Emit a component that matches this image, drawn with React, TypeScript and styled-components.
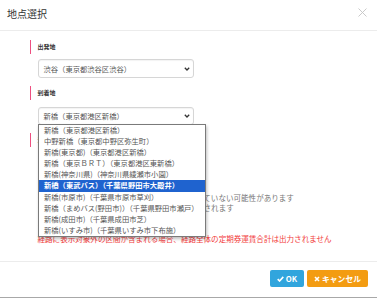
import React from 'react';
import styled, { createGlobalStyle } from 'styled-components';

const GlobalStyle = createGlobalStyle`
  html, body {
    margin: 0;
    padding: 0;
    background: #fff;
  }
  body {
    font-family: "Noto Sans CJK JP", "Noto Sans", sans-serif;
  }
`;

const departure = '渋谷（東京都渋谷区渋谷）';
const arrival = '新橋（東京都港区新橋）';

const options = [
  '新橋（東京都港区新橋）',
  '中野新橋（東京都中野区弥生町）',
  '新橋(東京都)（東京都港区新橋）',
  '新橋（東京ＢＲＴ）（東京都港区東新橋）',
  '新橋(神奈川県)（神奈川県綾瀬市小園）',
  '新橋（東武バス）（千葉県野田市大殿井）',
  '新橋(市原市)（千葉県市原市草刈）',
  '新橋（まめバス(野田市)）（千葉県野田市瀬戸）',
  '新橋(成田市)（千葉県成田市芝）',
  '新橋(いすみ市)（千葉県いすみ市下布施）',
];

const Chevron = () => (
  <svg width="6" height="4" viewBox="0 0 6 4">
    <path d="M0.8 0.8 L3 3 L5.2 0.8" fill="none" stroke="#333" strokeWidth="1.3" />
  </svg>
);

const App = () => {
  return (
    <>
      <GlobalStyle />
      <Modal>
        <Header>
          <Title>地点選択</Title>
          <Close>
            <svg width="9" height="9" viewBox="0 0 9 9">
              <path d="M0.5 0.5 L8.5 8.5 M8.5 0.5 L0.5 8.5" stroke="#c4c4c4" strokeWidth="0.9" />
            </svg>
          </Close>
        </Header>

        <Body>
          <Label>出発地</Label>
          <SelectBox $top={5} $height={19}>
            <span>{departure}</span>
            <Chevron />
          </SelectBox>

          <Label $top={8}>到着地</Label>
          <SelectBox $top={6.5} $height={18.5}>
            <span>{arrival}</span>
            <Chevron />
            <OptionList>
              {options.map((o, i) => (
                <OptionRow key={o} $selected={i === 5}>
                  {o}
                </OptionRow>
              ))}
            </OptionList>
          </SelectBox>

          <Label $top={8}>注意事項</Label>
          <Notes>
            <Note>※定期券運賃は一部の路線区間で正しく反映されていない可能性があります</Note>
            <Note>※表示対象外の区間は、経路検索の結果から除外されます</Note>
            <Note $red $top={8}>※以下の条件に該当する場合は注意してください:</Note>
            <Note $red $top={3}>経路に表示対象外の区間が含まれる場合、経路全体の定期券運賃合計は出力されません</Note>
          </Notes>
        </Body>

        <Footer>
          <Button $color="#31a5dd" $width={34}>
            <svg width="7" height="6" viewBox="0 0 7 6">
              <path d="M0.7 3.1 L2.6 5 L6.3 0.9" fill="none" stroke="#fff" strokeWidth="1.6" />
            </svg>
            OK
          </Button>
          <Button $color="#f39c12" $width={61}>
            <svg width="6" height="6" viewBox="0 0 6 6">
              <path d="M1 1 L5 5 M5 1 L1 5" stroke="#fff" strokeWidth="1.6" />
            </svg>
            キャンセル
          </Button>
        </Footer>
      </Modal>
    </>
  );
};

export default App;

const Modal = styled.div`
  width: 377px;
  height: 298px;
  box-sizing: border-box;
  border-bottom: 1px solid #a8a8a8;
  display: flex;
  flex-direction: column;
  background: #fff;
`;

const Header = styled.div`
  height: 31px;
  box-sizing: border-box;
  border-bottom: 1px solid #ececec;
  display: flex;
  align-items: center;
  justify-content: space-between;
  padding: 0 10px 2px 7px;
`;

const Title = styled.div`
  font-size: 10px;
  color: #333;
  line-height: 14px;
`;

const Close = styled.div`
  display: flex;
  align-items: center;
  margin-bottom: 4px;
`;

const Body = styled.div`
  height: 230px;
  box-sizing: border-box;
  padding: 9px 0 0 30px;
  display: flex;
  flex-direction: column;
  align-items: flex-start;
`;

const Label = styled.div<{ $top?: number }>`
  margin-top: ${(p) => p.$top ?? 0}px;
  height: 14px;
  line-height: 14px;
  border-left: 1.5px solid #ee4f80;
  padding-left: 6.5px;
  font-size: 6px;
  font-weight: bold;
  color: #333;
`;

const SelectBox = styled.div<{ $top: number; $height: number }>`
  position: relative;
  margin: ${(p) => p.$top}px 0 0 7.5px;
  width: 156px;
  height: ${(p) => p.$height}px;
  box-sizing: border-box;
  border: 1px solid #d6d6d6;
  border-radius: 3px;
  box-shadow: inset 0 1px 1px rgba(0, 0, 0, 0.05);
  display: flex;
  align-items: center;
  justify-content: space-between;
  padding: 0 3px 0 5px;
  font-size: 7.3px;
  color: #555;
`;

const OptionList = styled.div`
  position: absolute;
  top: 100%;
  left: -0.5px;
  width: 167.5px;
  box-sizing: border-box;
  border: 1px solid #7a7a7a;
  background: #fff;
  box-shadow: 1px 2px 3px rgba(0, 0, 0, 0.25);
  z-index: 2;
`;

const OptionRow = styled.div<{ $selected?: boolean }>`
  height: 11.1px;
  line-height: 11.1px;
  padding-left: 5px;
  font-size: 7.3px;
  white-space: nowrap;
  color: ${(p) => (p.$selected ? '#fff' : '#555')};
  background: ${(p) => (p.$selected ? '#1f63cf' : 'transparent')};
  font-weight: ${(p) => (p.$selected ? 'bold' : 'normal')};
`;

const Notes = styled.div`
  margin: 46px 0 0 7.5px;
  display: flex;
  flex-direction: column;
`;

const Note = styled.div<{ $red?: boolean; $top?: number }>`
  margin-top: ${(p) => p.$top ?? 0}px;
  height: 10px;
  line-height: 10px;
  font-size: 7.55px;
  white-space: nowrap;
  color: ${(p) => (p.$red ? '#f23a3a' : '#777')};
`;

const Footer = styled.div`
  flex: 1;
  border-top: 1px solid #ececec;
  display: flex;
  justify-content: flex-end;
  align-items: flex-start;
  gap: 3px;
  padding: 8px 9px 0 0;
`;

const Button = styled.div<{ $color: string; $width: number }>`
  width: ${(p) => p.$width}px;
  height: 17px;
  border-radius: 2px;
  background: ${(p) => p.$color};
  color: #fff;
  font-size: 7.8px;
  font-weight: bold;
  display: flex;
  align-items: center;
  justify-content: center;
  gap: 2px;
`;
